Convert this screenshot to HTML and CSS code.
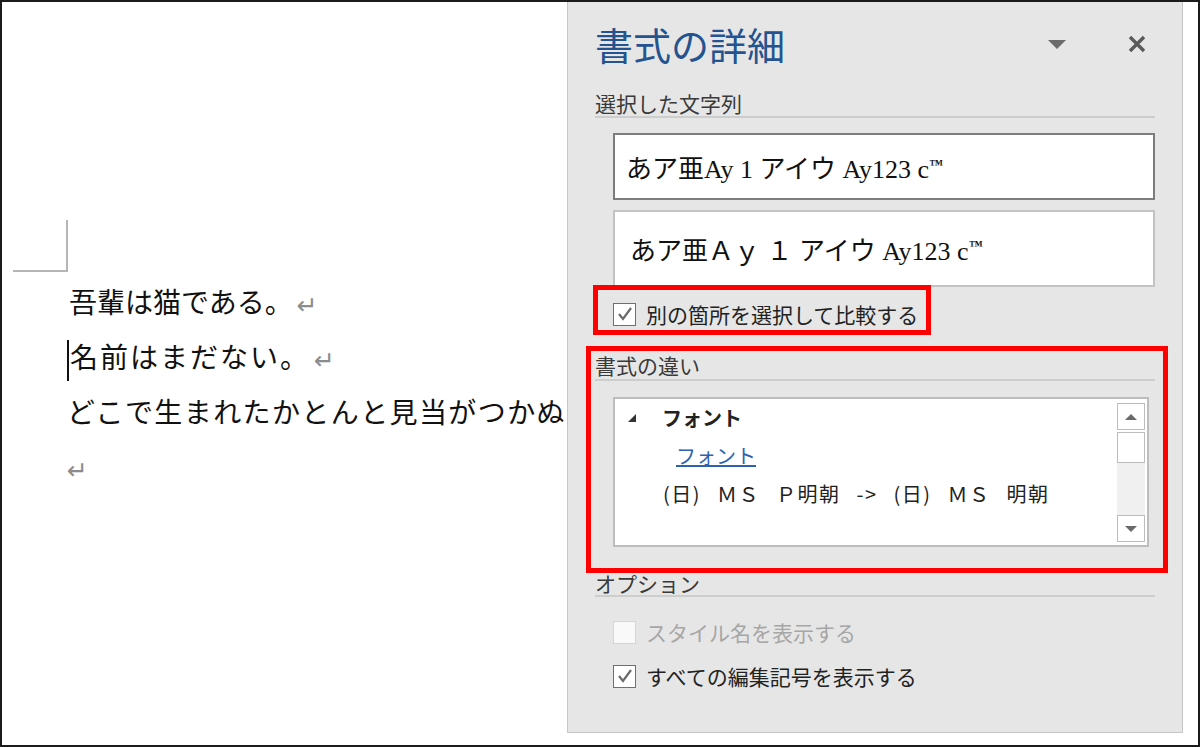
FILE: index.html
```html
<!DOCTYPE html>
<html lang="ja">
<head>
  <meta charset="UTF-8" />
  <title>書式の詳細</title>
  <link rel="stylesheet" href="styles.css">
</head>
<body>
  <div class="frame">
    <div class="doc">
      <div class="corner"></div>
      <div class="lines">
        <p class="line l1">吾輩は猫である。<span class="mark">↵</span></p>
        <p class="line l2"><span class="caret"></span>名前はまだない。<span class="mark">↵</span></p>
        <p class="line l3">どこで生まれたかとんと見当がつかぬ</p>
        <p class="line l4"><span class="mark">↵</span></p>
      </div>
    </div>

    <aside class="pane">
      <div class="pane-head">
        <h1 class="pane-title">書式の詳細</h1>
        <span class="pane-menu"></span>
        <svg class="pane-close" viewBox="0 0 20 20" width="20" height="20">
          <path d="M3 3 L17 17 M17 3 L3 17" stroke="#5a5a5a" stroke-width="3.4" fill="none" />
        </svg>
      </div>

      <h2 class="group first">選択した文字列</h2>
      <div class="sample s1">あア亜Ay 1 アイウ Ay123 c<span class="tm">™</span></div>
      <div class="sample s2">あア亜Ａｙ １ アイウ Ay123 c<span class="tm">™</span></div>

      <div class="check-row compare hl">
        <span class="box">
          <svg viewBox="0 0 20 20" width="20" height="20"><polyline points="4,10 8,15 16,4" stroke="#6a6a6a" stroke-width="2.2" fill="none" /></svg>
        </span>
        別の箇所を選択して比較する
      </div>

      <div class="diff hl">
        <h2 class="group">書式の違い</h2>
        <div class="listbox">
          <div class="list-body">
            <div class="li li-head"><span class="tri"></span>フォント</div>
            <div class="li li-link"><a href="#">フォント</a></div>
            <div class="li li-text">(日) ＭＳ Ｐ明朝 -&gt; (日) ＭＳ 明朝</div>
          </div>
          <div class="scroll">
            <div class="sb-btn"><span class="arrow-up"></span></div>
            <div class="sb-thumb"></div>
            <div class="sb-track"></div>
            <div class="sb-btn"><span class="arrow-down"></span></div>
          </div>
        </div>
      </div>

      <h2 class="group options">オプション</h2>
      <div class="check-row opt off">
        <span class="box"></span>
        スタイル名を表示する
      </div>
      <div class="check-row opt">
        <span class="box">
          <svg viewBox="0 0 20 20" width="20" height="20"><polyline points="4,10 8,15 16,4" stroke="#6a6a6a" stroke-width="2.2" fill="none" /></svg>
        </span>
        すべての編集記号を表示する
      </div>
    </aside>

    <div class="gutter"></div>
  </div>
</body>
</html>
```

FILE: styles.css
```css
* {
  box-sizing: border-box;
  margin: 0;
  padding: 0;
}
body {
  background: #fff;
  font-family: "Noto Sans CJK JP", "Noto Sans", sans-serif;
}
.frame {
  width: 1200px;
  height: 747px;
  border: 2px solid #1b1b1b;
  display: flex;
  overflow: hidden;
  background: #fff;
}

/* document side */
.doc {
  width: 565px;
  flex: none;
  padding-top: 218px;
  overflow: hidden;
  white-space: nowrap;
}
.corner {
  margin-left: 11px;
  width: 55px;
  height: 52px;
  border-right: 2px solid #b5b5b5;
  border-bottom: 2px solid #b5b5b5;
}
.lines {
  padding-left: 65px;
  margin-top: 2px;
}
.line {
  font-size: 28px;
  line-height: 55px;
  color: #111;
}
.l1 { padding-left: 2px; }
.l2 { letter-spacing: 2px; }
.l3 { letter-spacing: 1.4px; }
.caret {
  display: inline-block;
  width: 2px;
  height: 41px;
  background: #111;
  vertical-align: middle;
  margin-right: 1px;
}
.mark {
  display: inline-block;
  color: #8c8c8c;
  font-size: 25px;
  line-height: 1;
  vertical-align: middle;
  margin-left: 4px;
  letter-spacing: 0;
  font-family: "DejaVu Sans", sans-serif;
}
.l4 .mark { margin-left: 0; }

/* task pane */
.pane {
  width: 616px;
  height: 731px;
  flex: none;
  background: #e6e6e6;
  border-left: 1px solid #c6c6c6;
  border-right: 1px solid #c6c6c6;
  border-bottom: 1px solid #c6c6c6;
  padding: 18px 27px 0 27px;
}
.pane-head {
  display: flex;
  align-items: center;
  height: 48px;
}
.pane-title {
  font-size: 38px;
  font-weight: 400;
  line-height: 48px;
  color: #24538f;
}
.pane-menu {
  margin-left: auto;
  width: 0;
  height: 0;
  border-left: 9px solid transparent;
  border-right: 9px solid transparent;
  border-top: 9px solid #6b6b6b;
}
.pane-close {
  margin-left: 61px;
  margin-right: 8px;
}
.group {
  font-size: 21px;
  font-weight: 400;
  line-height: 26px;
  color: #3a3a3a;
  border-bottom: 2px solid #cdcdcd;
}
.group.first { margin-top: 22px; }

.sample {
  margin-left: 18px;
  background: #fff;
  display: flex;
  align-items: center;
  font-family: "Liberation Serif", "Noto Sans CJK JP", serif;
  font-size: 26px;
  color: #111;
  white-space: nowrap;
}
.tm {
  font-size: 14px;
  align-self: flex-start;
  margin-top: 22px;
  font-weight: 700;
}
.s2 .tm { margin-top: 26px; }
.s1 {
  margin-top: 15px;
  height: 67px;
  border: 2px solid #7d7d7d;
  padding-left: 11px;
}
.s2 {
  margin-top: 10px;
  height: 77px;
  border: 2px solid #c3c3c3;
  padding-left: 15px;
}

.check-row {
  display: flex;
  align-items: center;
  font-size: 21px;
  color: #222;
  white-space: nowrap;
}
.box {
  width: 23px;
  height: 23px;
  flex: none;
  border: 1.5px solid #6f6f6f;
  background: #fff;
  margin-right: 10px;
  display: flex;
  align-items: center;
  justify-content: center;
}
.hl {
  border: 5px solid #ff0000;
}
.compare {
  margin: -2px 0 0 -2px;
  width: 338px;
  height: 50px;
  padding: 8px 0 0 15px;
}

.diff {
  margin: 11px -13px 0 -9px;
  height: 227px;
  padding-top: 1px;
}
.diff .group {
  margin: 0 8px 0 4px;
  line-height: 27px;
}
.listbox {
  margin: 16px 14px 0 22px;
  height: 150px;
  border: 2px solid #bdbdbd;
  background: #fff;
  display: flex;
}
.list-body {
  flex: 1;
  padding-left: 13px;
  font-size: 20px;
  color: #222;
}
.li {
  line-height: 38px;
  white-space: nowrap;
}
.li-head {
  font-weight: 700;
  display: flex;
  align-items: center;
}
.tri {
  width: 0;
  height: 0;
  border-left: 8px solid transparent;
  border-bottom: 8px solid #333;
  margin-right: 26px;
}
.li-link { padding-left: 48px; }
.li-link a {
  color: #2f62ae;
  text-decoration: underline;
}
.li-text {
  padding-left: 35px;
  letter-spacing: 1.5px;
  word-spacing: 10px;
}
.scroll {
  width: 28px;
  margin: 4px 2px 3px 0;
  display: flex;
  flex-direction: column;
  background: #fff;
}
.sb-btn {
  height: 27px;
  border: 1.5px solid #bcbcbc;
  background: #fff;
  display: flex;
  align-items: center;
  justify-content: center;
}
.sb-thumb {
  margin-top: 2px;
  height: 31px;
  border: 1.5px solid #bcbcbc;
  background: #fff;
}
.sb-track {
  flex: 1;
  background: #f0f0f0;
}
.arrow-up {
  border-left: 6px solid transparent;
  border-right: 6px solid transparent;
  border-bottom: 6px solid #6a6a6a;
}
.arrow-down {
  border-left: 6px solid transparent;
  border-right: 6px solid transparent;
  border-top: 6px solid #6a6a6a;
}

.options {
  margin-top: -2px;
  line-height: 24px;
}
.opt {
  margin-left: 18px;
  height: 44px;
}
.options + .opt { margin-top: 13px; }
.opt.off { color: #a6a6a6; }
.opt.off .box {
  border-color: #d5d5d5;
  background: #f9f9f9;
}

.gutter {
  flex: 1;
  background: #fff;
}
```
